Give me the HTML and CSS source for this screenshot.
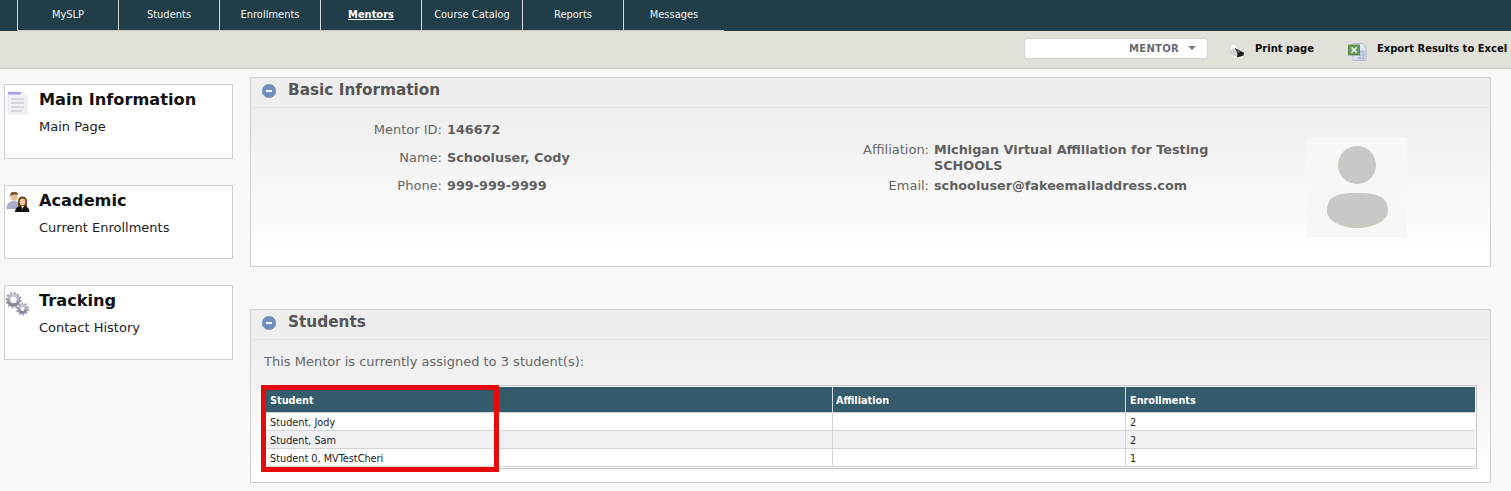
FILE: index.html
```html
<!DOCTYPE html>
<html lang="en">
<head>
<meta charset="utf-8">
<title>Mentor</title>
<link rel="stylesheet" href="styles.css">
</head>
<body>
<svg class="defs" width="0" height="0" aria-hidden="true">
  <defs>
    <linearGradient id="gear" x1="0" y1="0" x2="0" y2="1"><stop offset="0" stop-color="#c9cbd8"/><stop offset="1" stop-color="#7c7e92"/></linearGradient>
    <linearGradient id="sheet" x1="0" y1="0" x2="1" y2="1"><stop offset="0" stop-color="#f4f4f8"/><stop offset="1" stop-color="#c9d3e8"/></linearGradient>
  </defs>
</svg>
<header class="topbar">
  <nav class="tabs">
    <a class="tab">MySLP</a>
    <a class="tab">Students</a>
    <a class="tab">Enrollments</a>
    <a class="tab tab-active">Mentors</a>
    <a class="tab">Course Catalog</a>
    <a class="tab">Reports</a>
    <a class="tab">Messages</a>
  </nav>
</header>
<div class="toolbar">
  <div class="select"><span>MENTOR</span><i class="caret"></i></div>
  <a class="tool tool-print">
    <svg class="tool-icon" width="18" height="16" viewBox="0 0 18 16">
      <path d="M3 13 L10 15.800 L17 13.500 L10 11 Z" fill="#f2f2ee"/>
      <path d="M2.500 8 L4 1.500 L8 .800 L11 6 Z" fill="#fdfdfd" stroke="#cfcfcf" stroke-width=".6"/>
      <path d="M2.500 8 L8 5 L11 10.500 L10 14 L3 11 Z" fill="#d0d0d0"/>
      <path d="M8 5 L17 9.800 L16.500 12.500 L10 14.500 L10.500 10.500 Z" fill="#1b1b1b"/>
      <path d="M8 5 L11 10.500 L14 8.500 Z" fill="#5c5c5c"/>
    </svg>
    Print page
  </a>
  <a class="tool tool-excel">
    <svg class="tool-icon" width="19" height="19" viewBox="0 0 19 19">
      <path d="M5 1.500 H14 L18 5 V18.500 H5 Z" fill="url(#sheet)" stroke="#a9b7d3" stroke-width=".8"/>
      <path d="M9 10 H17 M9 13 H17 M9 16 H17 M12 8 V18 M15 8 V18" stroke="#9db0d6" stroke-width=".8"/>
      <rect x="0.500" y="3" width="11" height="10" fill="#6f9e63" stroke="#4d7f47" stroke-width=".8"/>
      <path d="M3.500 5.500 L8.500 10.500 M8.500 5.500 L3.500 10.500" stroke="#f1f7ee" stroke-width="1.500"/>
    </svg>
    Export Results to Excel
  </a>
</div>
<main class="page">
  <aside class="sidebar">
    <section class="side-box">
      <svg class="side-icon" width="34" height="32" viewBox="0 0 34 32">
        <path d="M3 7 H18 L22 11 V29 H3 Z" fill="#f1f0f4" stroke="#e6e6ea" stroke-width=".8"/>
        <rect x="3" y="7" width="13" height="2.500" fill="#ab9cf0"/>
        <path d="M6 14 H19 M6 18 H19 M6 22 H19 M6 26 H17" stroke="#d0d0d6" stroke-width="1.500"/>
      </svg>
      <div>
        <h2 class="side-title">Main Information</h2>
        <a class="side-link">Main Page</a>
      </div>
    </section>
    <section class="side-box">
      <svg class="side-icon" width="34" height="32" viewBox="0 0 34 32">
        <g transform="translate(1 5)">
          <ellipse cx="8" cy="5.500" rx="3.600" ry="4.200" fill="#e5bf98"/>
          <path d="M4 5 Q4 .800 8 .800 Q12 .800 12 4 Q8 2.500 4 5 Z" fill="#7a5a30"/>
          <path d="M0.500 18 Q0.500 10 8 10 Q13 10 14 14 L12 18 Z" fill="#a9b0c8"/>
          <path d="M12 11 Q12 5.500 16.500 5.500 Q21 5.500 21 11 L21 16 H12 Z" fill="#6d4319"/>
          <ellipse cx="16.500" cy="11" rx="2.800" ry="3.400" fill="#eec9a2"/>
          <path d="M9 21 Q9 15 16.500 15 Q23.500 15 23.500 21 Z" fill="#111"/>
          <path d="M15 15 L16.500 18 L18 15 Z" fill="#eec9a2"/>
        </g>
      </svg>
      <div>
        <h2 class="side-title">Academic</h2>
        <a class="side-link">Current Enrollments</a>
      </div>
    </section>
    <section class="side-box">
      <svg class="side-icon" width="34" height="32" viewBox="0 0 34 32">
        <g transform="translate(0 6)">
          <circle cx="8.500" cy="8" r="5" fill="none" stroke="url(#gear)" stroke-width="3.400"/>
          <circle cx="8.500" cy="8" r="7" fill="none" stroke="#9a9cb2" stroke-width="2" stroke-dasharray="2 1.660"/>
          <circle cx="17.500" cy="17" r="3.500" fill="none" stroke="url(#gear)" stroke-width="3"/>
          <circle cx="17.500" cy="17" r="5.500" fill="none" stroke="#9a9cb2" stroke-width="2" stroke-dasharray="1.800 1.650"/>
        </g>
      </svg>
      <div>
        <h2 class="side-title">Tracking</h2>
        <a class="side-link">Contact History</a>
      </div>
    </section>
  </aside>
  <div class="content">
    <section class="panel panel-basic">
      <h2 class="panel-head"><i class="minus"></i>Basic Information</h2>
      <div class="basic-body">
        <dl class="fields fields-left">
          <dt>Mentor ID:</dt><dd>146672</dd>
          <dt>Name:</dt><dd>Schooluser, Cody</dd>
          <dt>Phone:</dt><dd>999-999-9999</dd>
        </dl>
        <dl class="fields fields-right">
          <dt>Affiliation:</dt><dd>Michigan Virtual Affiliation for Testing SCHOOLS</dd>
          <dt>Email:</dt><dd>schooluser@fakeemailaddress.com</dd>
        </dl>
        <div class="avatar">
          <svg width="100" height="100" viewBox="0 0 100 100">
            <circle cx="50" cy="28" r="19" fill="#c9c8c4"/>
            <path d="M50 56 C68 56 81 58 81 74 C81 84 66 91 50 91 C34 91 20 84 20 74 C20 58 32 56 50 56 Z" fill="#c9c8c4"/>
          </svg>
        </div>
      </div>
    </section>
    <section class="panel panel-students">
      <h2 class="panel-head"><i class="minus"></i>Students</h2>
      <p class="assigned">This Mentor is currently assigned to 3 student(s):</p>
      <div class="table-wrap">
        <table class="grid">
          <thead>
            <tr><th class="col-student">Student</th><th class="col-aff">Affiliation</th><th>Enrollments</th></tr>
          </thead>
          <tbody>
            <tr><td>Student, Jody</td><td></td><td>2</td></tr>
            <tr class="alt"><td>Student, Sam</td><td></td><td>2</td></tr>
            <tr><td>Student 0, MVTestCheri</td><td></td><td>1</td></tr>
          </tbody>
        </table>
        <div class="highlight"></div>
      </div>
    </section>
  </div>
</main>
</body>
</html>
```
FILE: styles.css
```css
* { box-sizing: border-box; }
html, body { margin: 0; padding: 0; }
body {
  height: 491px;
  overflow: hidden;
  background: #f9f9f9;
  font-family: "DejaVu Sans", Verdana, sans-serif;
  color: #111;
}
.defs { position: absolute; }

.topbar { height: 31px; background: #203d48; padding-left: 17px; }
.tabs { display: flex; width: 707px; height: 31px; border-bottom: 1px solid #c8c8c4; }
.tab {
  flex: 1;
  border-left: 1px solid #d5d8d8;
  color: #f2f4f4;
  font-family: "DejaVu Sans Condensed", "DejaVu Sans", sans-serif;
  font-size: 11px;
  line-height: 30px;
  text-align: center;
}
.tab-active { font-weight: bold; text-decoration: underline; color: #fff; }

.toolbar {
  display: flex;
  align-items: center;
  height: 38px;
  background: #e1e1d9;
  border-bottom: 1px solid #c6c6c2;
  padding: 0 0 3px 1024px;
  font-size: 10px;
  font-weight: bold;
  white-space: nowrap;
}
.select {
  display: flex;
  flex: none;
  align-items: center;
  justify-content: flex-end;
  width: 184px;
  height: 21px;
  padding-right: 11px;
  background: #fff;
  border: 1px solid #d2d2d6;
  border-radius: 3px;
  color: #666a70;
  letter-spacing: .3px;
}
.caret {
  width: 0;
  height: 0;
  margin-left: 9px;
  border: 4px solid transparent;
  border-top: 4px solid #777;
  border-bottom: 0;
}
.tool { display: flex; flex: none; align-items: center; color: #0a0a0a; }
.tool-icon { flex: none; margin: 3px 10px -3px 0; }
.tool-print { margin-left: 19px; }
.tool-excel { margin-left: 34px; }

.page { display: flex; align-items: flex-start; }
.sidebar {
  display: flex;
  flex-direction: column;
  gap: 26px;
  width: 229px;
  margin: 15px 17px 0 4px;
}
.side-box {
  display: flex;
  height: 74.500px;
  background: #fff;
  border: 1px solid #cfcfcf;
}
.side-icon { flex: none; }
.side-title { margin: 4px 0 0; font-size: 16.200px; line-height: 22px; font-weight: bold; color: #111; }
.side-link { display: block; margin-top: 8px; font-size: 13px; line-height: 16px; color: #1c1c1c; }

.content { width: 1241px; margin-top: 8px; }
.panel { border: 1px solid #d0d0d0; }
.panel-basic { height: 190px; background: linear-gradient(#eeeeee 30px, #fefefe 170px); }
.panel-students { height: 174px; margin-top: 42px; background: linear-gradient(#eeeeee 30px, #ffffff 170px); }
.panel-head {
  display: flex;
  align-items: center;
  height: 30px;
  margin: 0;
  padding: 0 0 6px 11px;
  border-bottom: 1px solid #e6e6e6;
  background: #eeeeee;
  font-size: 15.300px;
  font-weight: bold;
  color: #555;
}
.minus {
  position: relative;
  width: 14px;
  height: 14px;
  margin: 2px 12px 0 0;
  border-radius: 50%;
  background: #708fbd;
}
.minus::after {
  content: "";
  position: absolute;
  left: 4px;
  top: 6px;
  width: 6px;
  height: 2px;
  background: #fff;
}

.basic-body { position: relative; height: 158px; font-size: 13px; color: #666; }
.fields { display: grid; margin: 0; row-gap: 12px; line-height: 16px; }
.fields dt { text-align: right; padding-right: 5px; }
.fields dd { margin: 0; font-size: 12.800px; font-weight: bold; color: #5f5f5f; }
.fields-left { position: absolute; left: 0; top: 14px; grid-template-columns: 196px 300px; }
.fields-right { position: absolute; left: 570px; top: 34px; grid-template-columns: 113px 300px; row-gap: 4px; }
.avatar {
  position: absolute;
  left: 1056px;
  top: 29px;
  width: 100px;
  height: 100px;
  background: #f7f7f7;
}
.avatar svg { display: block; }

.assigned { margin: 14px 0 0 13px; font-size: 13px; line-height: 16px; color: #666; }
.table-wrap { position: relative; margin: 15px 13px 0 12px; }
.grid {
  width: 100%;
  table-layout: fixed;
  border-collapse: separate;
  border-spacing: 0;
  padding: 1px;
  border: 1px solid #c8c8c8;
  font-family: "DejaVu Sans Condensed", "DejaVu Sans", sans-serif;
  font-size: 10.800px;
  background: #fff;
}
.grid th {
  height: 26px;
  padding: 1px 3px 0;
  background: #345b6c;
  color: #fff;
  font-weight: bold;
  text-align: left;
  border-left: 1px solid #d5dcdf;
  border-bottom: 1px solid #d0d0d0;
}
.grid td {
  height: 18px;
  padding: 1px 3px 0;
  color: #222;
  border-left: 1px solid #d5d5d5;
  border-bottom: 1px solid #d5d5d5;
}
.grid th:first-child, .grid td:first-child { padding-left: 5px; border-left: 0; }
.grid th:last-child, .grid td:last-child { padding-left: 4px; }
.grid .alt td { background: #f0f0f5; }
.col-student { width: 567px; }
.col-aff { width: 293px; }
.highlight {
  position: absolute;
  left: -2px;
  top: 0;
  width: 238px;
  height: 87px;
  border: 5px solid #e60b0b;
}
```
